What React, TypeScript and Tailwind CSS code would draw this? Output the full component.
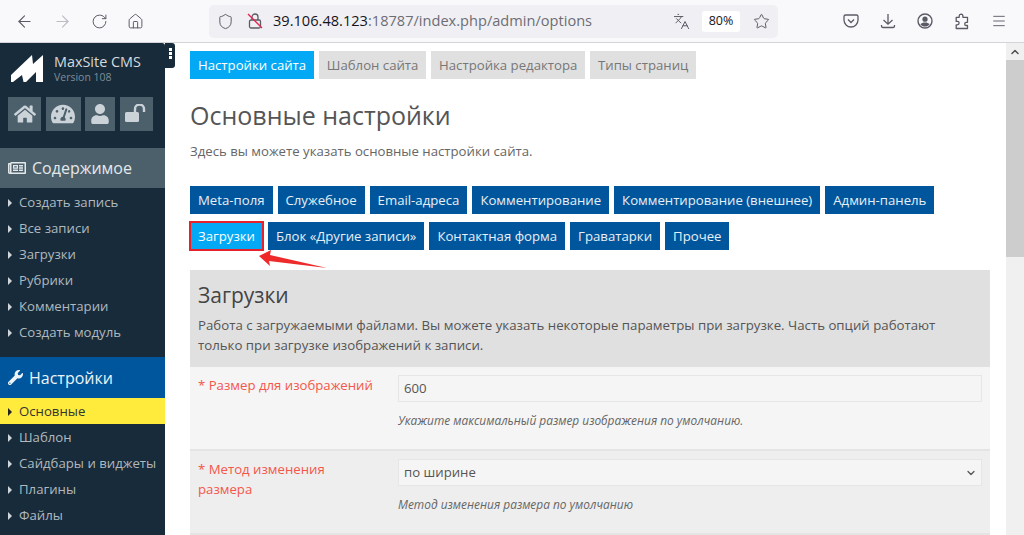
import { ArrowLeft, ArrowRight, RotateCw, House, Shield, Star, Menu, ChevronUp, ChevronDown, Languages } from 'lucide-react'
import { FaHome, FaTachometerAlt, FaUser, FaWrench, FaRegNewspaper } from 'react-icons/fa'

const tabs = [
  { label: 'Настройки сайта', active: true },
  { label: 'Шаблон сайта' },
  { label: 'Настройка редактора' },
  { label: 'Типы страниц' },
]

const row1 = ['Meta-поля', 'Служебное', 'Email-адреса', 'Комментирование', 'Комментирование (внешнее)', 'Админ-панель']
const row2 = ['Блок «Другие записи»', 'Контактная форма', 'Граватарки', 'Прочее']

const contentLinks = ['Создать запись', 'Все записи', 'Загрузки', 'Рубрики', 'Комментарии', 'Создать модуль']
const settingsLinks = ['Шаблон', 'Сайдбары и виджеты', 'Плагины', 'Файлы']

function SideLink({ label, active }: { label: string; active?: boolean }) {
  return (
    <div className={`h-[26px] flex items-center pl-2 pt-[1px] text-[13.2px] ${active ? 'bg-[#ffeb3b] text-[#333]' : 'text-[#b0b9bf]'}`}>
      <span className={`w-0 h-0 border-y-[4px] border-y-transparent border-l-[4px] mr-[7px] ${active ? 'border-l-[#222]' : 'border-l-[#cfd5d9]'}`} />
      {label}
    </div>
  )
}

function Toolbar() {
  return (
    <div className="h-[43px] shrink-0 flex items-center bg-[#f9f9fb] border-b border-[#d4d4d8] text-[#5b5b66]">
      <div className="flex items-center gap-[19px] pl-[15px] w-[209px]">
        <ArrowLeft size={19} strokeWidth={1.4} />
        <ArrowRight size={19} strokeWidth={1.4} className="text-[#bcbcc2]" />
        <RotateCw size={17} strokeWidth={1.4} />
        <House size={17} strokeWidth={1.4} />
      </div>
      <div className="w-[569px] h-[33px] rounded-[5px] bg-[#f0f0f4] flex items-center pl-[8px]">
        <Shield size={17} strokeWidth={1.4} />
        <svg width="16" height="18" viewBox="0 0 16 18" fill="none" className="ml-[13px] mr-[10px]">
          <rect x="2.5" y="8" width="11" height="8" rx="1.5" stroke="#5b5b66" strokeWidth="1.3" />
          <path d="M5 8V5a3 3 0 0 1 6 0v3" stroke="#5b5b66" strokeWidth="1.3" />
          <path d="M1 2l14 14" stroke="#e22850" strokeWidth="1.4" />
        </svg>
        <span className="text-[14.6px] text-[#15141a]">
          39.106.48.123<span className="text-[#6d6d75]">:18787/index.php/admin/options</span>
        </span>
        <div className="ml-auto flex items-center">
          <Languages size={17} strokeWidth={1.4} />
          <span className="ml-[12px] w-[38px] h-[21px] rounded-[3px] bg-white flex items-center justify-center text-[12.5px] text-[#15141a]">80%</span>
          <Star size={17} strokeWidth={1.4} className="ml-[13px] mr-[8px]" />
        </div>
      </div>
      <div className="flex items-center gap-[21px] ml-[65px]">
        <svg width="16" height="16" viewBox="0 0 16 16" fill="none" stroke="#5b5b66" strokeWidth="1.3">
          <path d="M2.5 2h11A1.5 1.5 0 0 1 15 3.5V7a7 7 0 0 1-14 0V3.5A1.5 1.5 0 0 1 2.5 2z" />
          <path d="M5 6.5l3 3 3-3" />
        </svg>
        <svg width="16" height="16" viewBox="0 0 16 16" fill="none" stroke="#5b5b66" strokeWidth="1.3">
          <path d="M8 1v10M3.5 7L8 11.2 12.5 7" />
          <path d="M1.5 12v1.2a1.5 1.5 0 0 0 1.5 1.3h10a1.5 1.5 0 0 0 1.5-1.3V12" />
        </svg>
        <svg width="16" height="16" viewBox="0 0 16 16" fill="none">
          <circle cx="8" cy="8" r="7" stroke="#5b5b66" strokeWidth="1.4" />
          <circle cx="8" cy="6.2" r="2.6" fill="#5b5b66" />
          <path d="M3.4 11.2c1-1.2 2.6-1.7 4.6-1.7s3.6.5 4.6 1.7C11.5 12.8 9.9 13.6 8 13.6s-3.5-.8-4.6-2.4z" fill="#5b5b66" />
        </svg>
        <svg width="16" height="17" viewBox="0 0 16 17" fill="none" stroke="#5b5b66" strokeWidth="1.3" strokeLinejoin="round">
          <path d="M7 1.2a1.9 1.9 0 0 1 1.9 1.9v1.2h4.6v5h-1.2a1.6 1.6 0 0 0 0 3.2h1.2V15.5H2.2v-3.7h1.2a1.7 1.7 0 0 0 0-3.4H2.2V4.3h3V3.1A1.9 1.9 0 0 1 7 1.2z" />
        </svg>
        <Menu size={16} strokeWidth={1.4} />
      </div>
    </div>
  )
}

function Sidebar() {
  return (
    <aside className="relative w-[165px] shrink-0 bg-[#182b3a] rounded-tr-[3px]">
      <div className="absolute right-[-10px] top-0 w-[10px] h-[25px] bg-[#182b3a] rounded-r-[3px] flex flex-col items-center justify-center gap-[1px] pb-[4px]">
        <span className="w-[3px] h-[3px] bg-white" />
        <span className="w-[3px] h-[3px] bg-white" />
        <span className="w-[3px] h-[3px] bg-white" />
      </div>
      <div className="flex pl-[10px] pt-[12px] h-[44px]">
        <svg width="34" height="28" viewBox="0 0 34 28" fill="white">
          <path d="M1 20L22 0l1 9L33 0v27H26V17L16 27H13.5L12 20 3 27H1z" />
        </svg>
        <div className="ml-[10px] -mt-[2px]">
          <div className="text-[14.4px] leading-[17px] text-[#d5dadd]">MaxSite CMS</div>
          <div className="mt-[1px] text-[10.5px] leading-[12px] text-[#7f8d98]">Version 108</div>
        </div>
      </div>
      <div className="flex pl-[8px] mt-[10px] gap-[4.5px] text-[#cbd3d9]">
        <div className="w-[33px] h-[34px] bg-[#4c606c] flex items-center justify-center"><FaHome size={22} /></div>
        <div className="w-[35px] h-[34px] bg-[#4c606c] flex items-center justify-center"><FaTachometerAlt size={24} /></div>
        <div className="w-[30px] h-[34px] bg-[#4c606c] flex items-center justify-center"><FaUser size={20} /></div>
        <div className="w-[33px] h-[34px] bg-[#4c606c] flex items-center justify-center">
          <svg width="24" height="20" viewBox="0 0 24 20" fill="none">
            <rect x="1" y="8" width="14" height="10" rx="1.5" fill="currentColor" />
            <path d="M11 8V5a4.5 4.5 0 0 1 9 0v3" stroke="currentColor" strokeWidth="2.4" />
          </svg>
        </div>
      </div>
      <div className="mt-[17px] h-[40px] bg-[#4c606c] flex items-center pl-[8px] text-[16px] text-[#e4e8ea]">
        <FaRegNewspaper size={18} className="mr-[6px]" />
        Содержимое
      </div>
      <div className="pt-[1px]">
        {contentLinks.map(l => <SideLink key={l} label={l} />)}
      </div>
      <div className="mt-[12px] h-[41px] bg-[#00569d] flex items-center pl-[8px] text-[16px] text-[#eef3f7]">
        <FaWrench size={15} className="mr-[6px]" />
        Настройки
      </div>
      <SideLink label="Основные" active />
      {settingsLinks.map(l => <SideLink key={l} label={l} />)}
    </aside>
  )
}

function Field({ label, hint, children, bg }: { label: React.ReactNode; hint: string; children: React.ReactNode; bg: string }) {
  return (
    <div className={`flex border-b-2 border-[#e4e4e4] px-[8px] pt-[8px] pb-[21px] ${bg}`}>
      <div className="w-[200px] shrink-0 leading-[20px] text-[#f4564a]">{label}</div>
      <div className="flex-1">
        {children}
        <div className="mt-[10px] text-[11.9px] leading-[16px] italic text-[#666]">{hint}</div>
      </div>
    </div>
  )
}

function Main() {
  return (
    <main className="relative flex-1 pl-[25px] pr-[16px] pt-[8px] text-[13.2px]">
      <div className="flex gap-[4.67px]">
        {tabs.map(t => (
          <div key={t.label} className={`h-[28px] px-[8px] pt-[1px] flex items-center ${t.active ? 'bg-[#03a9f4] text-white' : 'bg-[#e0e0e0] text-[#777]'}`}>{t.label}</div>
        ))}
      </div>
      <h1 className="mt-[20px] text-[25px] leading-[32px] text-[#555]">Основные настройки</h1>
      <p className="mt-[11px] leading-[18px] text-[#666]">Здесь вы можете указать основные настройки сайта.</p>
      <div className="mt-[26px] flex flex-wrap gap-x-[5px] gap-y-[8px]">
        {row1.map(b => <div key={b} className="h-[28px] px-[8px] pt-[1px] flex items-center bg-[#00569d] text-[#e8eff5]">{b}</div>)}
        <div className="h-[28px] px-[8px] pt-[1px] flex items-center bg-[#03a9f4] text-white">Загрузки</div>
        {row2.map(b => <div key={b} className="h-[28px] px-[8px] pt-[1px] flex items-center bg-[#00569d] text-[#e8eff5]">{b}</div>)}
      </div>
      <section className="mt-[20px]">
        <div className="bg-[#e0e0e0] px-[8px] pt-[12px] pb-[12px]">
          <h2 className="text-[21px] leading-[26px] text-[#444]">Загрузки</h2>
          <p className="mt-[7px] text-[13.25px] leading-[20px] text-[#555]">Работа с загружаемыми файлами. Вы можете указать некоторые параметры при загрузке. Часть опций работают<br />только при загрузке изображений к записи.</p>
        </div>
        <Field bg="bg-[#f5f5f5]" label="* Размер для изображений" hint="Укажите максимальный размер изображения по умолчанию.">
          <div className="h-[27px] bg-[#f5f5f5] border border-[#e6e6e6] flex items-center px-[5px] text-[#555]">600</div>
        </Field>
        <Field bg="bg-[#eeeeee]" label={<>* Метод изменения<br />размера</>} hint="Метод изменения размера по умолчанию">
          <div className="h-[27px] bg-[#f5f5f5] border border-[#e6e6e6] flex items-center justify-between pl-[5px] pr-[4px] text-[#555]">
            по ширине
            <ChevronDown size={12} strokeWidth={2.5} className="text-[#555]" />
          </div>
        </Field>
      </section>
      {/* red annotation */}
      <div className="absolute left-[24px] top-[178px] w-[75px] h-[30px] border-2 border-[#e8202a]" />
      <svg width="72" height="20" viewBox="0 0 72 20" className="absolute left-[94px] top-[207px]">
        <path d="M0 6L12 0l-1 5 57 13L10 11l1 5z" fill="#ee2a2a" />
      </svg>
    </main>
  )
}

export default function App() {
  return (
    <div className="w-[1024px] h-[535px] overflow-hidden flex flex-col bg-white font-['Open_Sans',sans-serif]">
      <Toolbar />
      <div className="flex-1 flex min-h-0">
        <Sidebar />
        <Main />
        <div className="w-[18px] shrink-0 bg-[#f0f0f0] flex flex-col">
          <div className="h-[17px] flex items-center justify-center"><ChevronUp size={12} strokeWidth={3} className="text-[#505050]" /></div>
          <div className="h-[197px] bg-[#cdcdcd]" />
        </div>
      </div>
    </div>
  )
}
